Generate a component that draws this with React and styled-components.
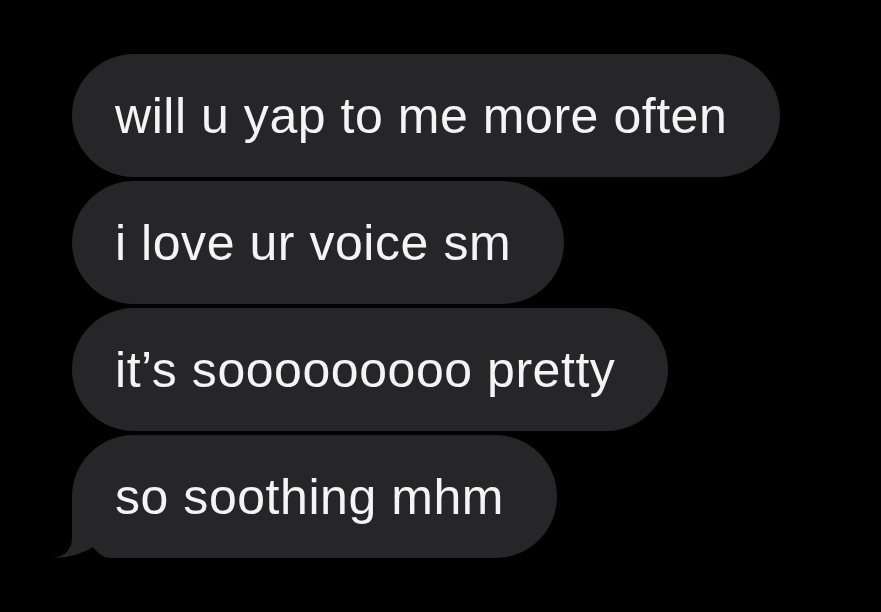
import styled, { createGlobalStyle } from 'styled-components';

const GlobalStyle = createGlobalStyle`
  html, body {
    margin: 0;
    padding: 0;
    background: #000;
  }
  body {
    width: 881px;
    height: 612px;
    overflow: hidden;
  }
`;

const Thread = styled.div`
  display: flex;
  flex-direction: column;
  align-items: flex-start;
  gap: 4px;
  padding: 54px 0 0 72px;
  width: 881px;
  height: 612px;
  box-sizing: border-box;
  background: #000;
`;

const Bubble = styled.div`
  position: relative;
  box-sizing: border-box;
  height: 123px;
  padding: 32px 53px 31px 43px;
  background: #262628;
  border-radius: ${({ $tail }) => ($tail ? '62px 62px 62px 0' : '62px')};
  color: #f4f4f4;
  font-family: 'Liberation Sans', Arial, sans-serif;
  font-size: 50px;
  letter-spacing: 0.55px;
  line-height: 60px;
  white-space: nowrap;
`;

const Tail = styled.svg`
  position: absolute;
  left: -20px;
  bottom: 0;
  width: 60px;
  height: 50px;
  display: block;
`;

const BubbleTail = () => (
  <Tail viewBox="0 0 60 50">
    <path d="M20 20 L20 29 C20 42 13 48 1 50 C14 50 28 47 41 39 L41 20 Z" fill="#262628" />
    <path d="M1 50 C14 50 28 47 41 39 C46 45 50 50 60 50 Z" fill="#000" />
  </Tail>
);

const messages = [
  'will u yap to me more often',
  'i love ur voice sm',
  'it’s sooooooooo pretty',
  'so soothing mhm',
];

const App = () => {
  return (
    <>
      <GlobalStyle />
      <Thread>
        {messages.map((text, i) => {
          const last = i === messages.length - 1;
          return (
            <Bubble key={i} $tail={last}>
              {text}
              {last && <BubbleTail />}
            </Bubble>
          );
        })}
      </Thread>
    </>
  );
};

export default App;
